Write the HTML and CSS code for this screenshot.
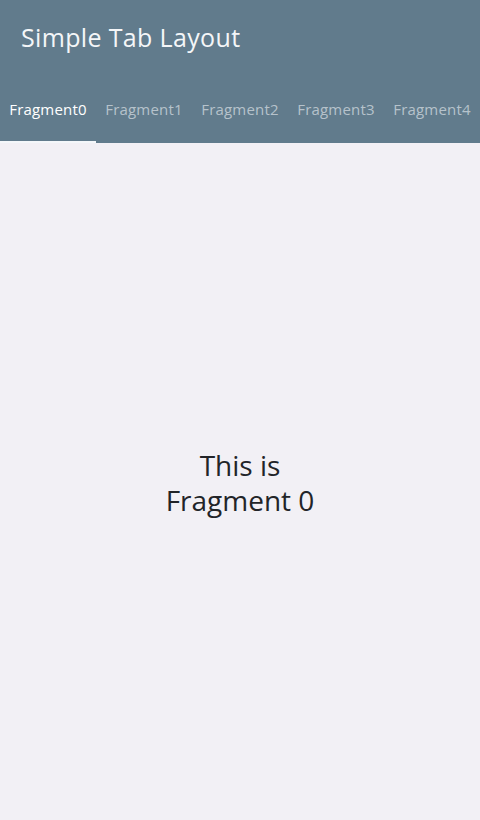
FILE: index.html
```html
<!DOCTYPE html>
<html>
<head>
<meta charset="utf-8">
<link rel="stylesheet" href="styles.css">
</head>
<body>
<div class="app">
  <header class="appbar">
    <div class="toolbar"><span class="title">Simple Tab Layout</span></div>
    <nav class="tabs">
      <div class="tab active">Fragment0</div>
      <div class="tab">Fragment1</div>
      <div class="tab">Fragment2</div>
      <div class="tab">Fragment3</div>
      <div class="tab">Fragment4</div>
    </nav>
  </header>
  <main class="content">
    <p class="message">This is<br>Fragment 0</p>
  </main>
</div>
</body>
</html>
```
FILE: styles.css
```css
html, body {
  margin: 0;
  padding: 0;
}
body {
  font-family: "Open Sans", "Noto Sans", sans-serif;
  background: #f2f0f5;
}
.app {
  width: 480px;
  height: 820px;
  display: flex;
  flex-direction: column;
}
.appbar {
  background: #617b8c;
  height: 143px;
  display: flex;
  flex-direction: column;
}
.toolbar {
  height: 74px;
  display: flex;
  align-items: center;
  padding-left: 21px;
}
.title {
  color: #f4f6f8;
  font-size: 25px;
  letter-spacing: 0.35px;
}
.tabs {
  flex: 1;
  display: flex;
}
.tab {
  width: 96px;
  display: flex;
  align-items: center;
  justify-content: center;
  font-size: 15px;
  color: #b6c2cb;
  letter-spacing: 0.2px;
  padding-top: 3px;
  box-sizing: border-box;
  border-bottom: 2px solid transparent;
  white-space: nowrap;
}
.tab.active {
  color: #ffffff;
  border-bottom-color: #f4f7fa;
}
.content {
  flex: 1;
  display: flex;
  align-items: center;
  justify-content: center;
  padding-top: 2px;
}
.message {
  margin: 0;
  text-align: center;
  font-size: 28px;
  line-height: 35px;
  color: #222428;
}
```
